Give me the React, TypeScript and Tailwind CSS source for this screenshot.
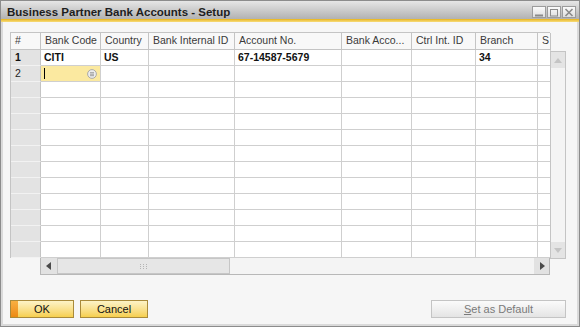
import React from "react";

const cols = [
  { label: "#", w: "w-[30px]" },
  { label: "Bank Code", w: "w-[60px]" },
  { label: "Country", w: "w-[48px]" },
  { label: "Bank Internal ID", w: "w-[86px]" },
  { label: "Account No.", w: "w-[107px]" },
  { label: "Bank Acco...", w: "w-[70px]" },
  { label: "Ctrl Int. ID", w: "w-[64px]" },
  { label: "Branch", w: "w-[62px]" },
  { label: "S", w: "w-[13px]" },
];

const rows: string[][] = [
  ["1", "CITI", "US", "", "67-14587-5679", "", "", "34", ""],
  ["2", "", "", "", "", "", "", "", ""],
  ...Array.from({ length: 11 }, () => ["", "", "", "", "", "", "", "", ""]),
];

function WinButton({ kind }: { kind: "min" | "max" | "close" }) {
  return (
    <div className="w-[14px] h-[12px] border border-[#9c9c9c] bg-gradient-to-b from-[#fbfbfb] to-[#dedede] flex items-center justify-center">
      <svg width="10" height="9" viewBox="0 0 10 9">
        {kind === "min" && <rect x="1" y="6.5" width="8" height="2" fill="#8a8a8a" />}
        {kind === "max" && <rect x="1.5" y="1.5" width="7" height="6.5" fill="none" stroke="#8a8a8a" />}
        {kind === "close" && <path d="M1.5 1 L8.5 8 M8.5 1 L1.5 8" stroke="#8a8a8a" strokeWidth="1.6" />}
      </svg>
    </div>
  );
}

function ListIcon() {
  return (
    <svg width="10" height="10" viewBox="0 0 10 10" className="shrink-0">
      <circle cx="5" cy="5" r="4.4" fill="#ececec" stroke="#a4a4a4" strokeWidth="0.9" />
      <path d="M3 3.7 H7 M3 5.2 H7 M3 6.7 H7" stroke="#8c8c8c" strokeWidth="0.8" />
    </svg>
  );
}

export default function App() {
  return (
    <div className="w-[580px] h-[327px] bg-[#f6f6f6] border border-[#8c8c8c] flex flex-col overflow-hidden font-['Liberation_Sans',Arial,sans-serif] text-[#333]">
      {/* title bar */}
      <div className="h-[18px] shrink-0 bg-gradient-to-b from-[#e6e6e6] to-[#b2b2b2] flex items-end justify-between pl-[6px] pr-[3px] pb-[1px]">
        <span className="text-[11.5px] font-bold text-[#1e1e1e] leading-none">Business Partner Bank Accounts - Setup</span>
        <div className="flex gap-[1px]">
          <WinButton kind="min" />
          <WinButton kind="max" />
          <WinButton kind="close" />
        </div>
      </div>
      <div className="h-[3px] shrink-0 bg-gradient-to-b from-[#e9b400] to-[#f6dc78]" />

      <div className="flex-1 flex flex-col border-x-2 border-b-2 border-[#dadada] pl-[7px] pr-[11px]">
        {/* grid */}
        <div className="flex mt-[10px]">
          <div className="flex flex-col w-[540px]">
            <div className="flex h-[18px] border-t border-l border-[#c4c4c4] bg-[#f8f8f8]">
              {cols.map((c) => (
                <div key={c.label} className={`${c.w} shrink-0 border-r border-b border-[#c4c4c4] px-[4px] flex items-center text-[10.5px] text-[#3a3a3a] whitespace-nowrap overflow-hidden`}>
                  {c.label}
                </div>
              ))}
            </div>
            {rows.map((r, ri) => (
              <div key={ri} className="flex h-[16px] border-l border-[#c4c4c4]">
                {r.map((v, ci) => {
                  const isNum = ci === 0;
                  const active = ri === 1 && ci === 1;
                  return (
                    <div
                      key={ci}
                      className={`${cols[ci].w} shrink-0 border-r border-b border-[#cfcfcf] flex items-center whitespace-nowrap overflow-hidden text-[10.5px] ${
                        isNum ? "bg-[#e3e3e3] border-b-[#f2f2f2] border-r-[#c4c4c4] pl-[4px]" : active ? "bg-[#fbe9a0] pl-[3px] pr-[3px]" : "bg-white pl-[3px]"
                      } ${ri === 0 ? "font-bold text-[#111]" : "text-[#222]"}`}
                    >
                      {active ? (
                        <div className="flex items-center justify-between w-full">
                          <span className="w-[1px] h-[11px] bg-black" />
                          <ListIcon />
                        </div>
                      ) : (
                        v
                      )}
                    </div>
                  );
                })}
              </div>
            ))}
            {/* horizontal scrollbar */}
            <div className="flex h-[17px]">
              <div className="w-[30px] shrink-0" />
              <div className="flex-1 flex border-x border-b border-[#b8b8b8] bg-[#f4f4f4]">
                <div className="w-[16px] shrink-0 bg-[#e2e2e2] flex items-center justify-center">
                  <svg width="6" height="8" viewBox="0 0 6 8"><path d="M5 0 L0 4 L5 8 Z" fill="#4a4a4a" /></svg>
                </div>
                <div className="w-[173px] shrink-0 border border-[#c6c6c6] bg-[#e6e6e6] flex items-center justify-center">
                  <svg width="7" height="5" viewBox="0 0 7 5">
                    {[0, 3, 6].map((x) => [0, 2, 4].map((y) => <rect key={`${x}-${y}`} x={x} y={y} width="1" height="1" fill="#b4b4b4" />))}
                  </svg>
                </div>
                <div className="flex-1" />
                <div className="w-[15px] shrink-0 bg-[#e2e2e2] flex items-center justify-center">
                  <svg width="6" height="8" viewBox="0 0 6 8"><path d="M1 0 L6 4 L1 8 Z" fill="#4a4a4a" /></svg>
                </div>
              </div>
            </div>
          </div>
          {/* vertical scrollbar */}
          <div className="w-[16px] h-[208px] mt-[19px] border border-[#c4c4c4] bg-[#f4f4f4] flex flex-col justify-between">
            <div className="h-[16px] bg-[#e4e4e4] flex items-center justify-center">
              <svg width="8" height="5" viewBox="0 0 8 5"><path d="M0 5 L4 0 L8 5 Z" fill="#c4c4c4" /></svg>
            </div>
            <div className="h-[16px] bg-[#e4e4e4] flex items-center justify-center">
              <svg width="8" height="5" viewBox="0 0 8 5"><path d="M0 0 L4 5 L8 0 Z" fill="#c4c4c4" /></svg>
            </div>
          </div>
        </div>

        {/* buttons */}
        <div className="flex items-center mt-[25px]">
          <button className="w-[64px] h-[18px] border border-[#a98a3a] bg-gradient-to-b from-[#fdf3c6] to-[#f6cf4c] text-[11px] text-[#111] relative flex items-center justify-center">
            <span className="absolute left-0 top-0 bottom-0 w-[7px] bg-gradient-to-b from-[#f8b040] to-[#ec8a10]" />
            OK
          </button>
          <button className="w-[68px] h-[18px] ml-[6px] border border-[#a98a3a] bg-gradient-to-b from-[#fdf3c6] to-[#f6cf4c] text-[11px] text-[#111] flex items-center justify-center">
            Cancel
          </button>
          <div className="flex-1" />
          <button className="w-[135px] h-[18px] border border-[#c4c4c4] bg-gradient-to-b from-[#fbfbfb] to-[#e4e4e4] text-[11px] text-[#7a7a7a] flex items-center justify-center">
            <span className="underline">S</span>et as Default
          </button>
        </div>
      </div>
    </div>
  );
}
